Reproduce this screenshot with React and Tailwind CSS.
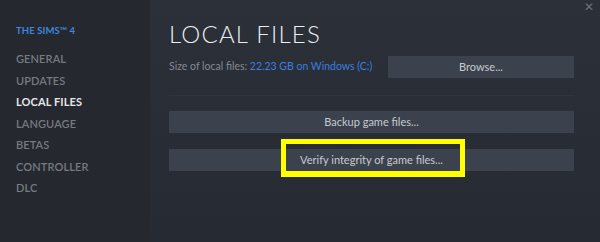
import React from "react";

const navItems = ["GENERAL", "UPDATES", "LOCAL FILES", "LANGUAGE", "BETAS", "CONTROLLER", "DLC"];

const SideNav = () => (
  <div className="w-[150px] shrink-0 bg-[#25282f] pl-4 pt-[25px]">
    <div className="text-[9.5px] font-bold text-[#3f86dc] tracking-[0.01em] leading-[12px]">
      THE SIMS™ 4
    </div>
    <ul className="mt-[15px] flex flex-col gap-[8.5px]">
      {navItems.map((item) => (
        <li
          key={item}
          className={
            item === "LOCAL FILES"
              ? "text-[11px] leading-[13px] font-bold text-[#e4e6e9] tracking-[0.01em]"
              : "text-[11px] leading-[13px] font-semibold text-[#767a81] tracking-[0.01em]"
          }
        >
          {item}
        </li>
      ))}
    </ul>
  </div>
);

const GameButton = ({ children, className = "" }) => (
  <button
    className={
      "h-[22px] bg-[#3c424d] text-[11px] text-[#c6cad0] flex items-center justify-center " +
      className
    }
  >
    {children}
  </button>
);

export default function App() {
  return (
    <div
      className="w-[600px] h-[242px] flex overflow-hidden bg-[#2a2e36]"
      style={{ fontFamily: "Lato, 'Open Sans', sans-serif" }}
    >
      <SideNav />
      <div className="relative flex-1 bg-gradient-to-b from-[#2c3039] to-[#262a32] pl-[19px] pr-[26px] pt-[22px]">
        <button className="absolute right-[6px] top-[1px] text-[#6c7079] text-[12px] leading-none">
          ✕
        </button>
        <h1 className="text-[24px] leading-[24px] font-light text-[#eceef0] tracking-[0.05em]">
          LOCAL FILES
        </h1>
        <div className="mt-[10px] flex items-center justify-between">
          <span className="text-[10.5px] text-[#868a91]">
            Size of local files:{" "}
            <span className="text-[#3a7fe0]">22.23 GB on Windows (C:)</span>
          </span>
          <GameButton className="w-[186px]">Browse...</GameButton>
        </div>
        <div className="mt-[17px] h-px bg-[#30343c]" />
        <div className="mt-[15px] flex flex-col gap-[16px]">
          <GameButton className="w-full">Backup game files...</GameButton>
          <div className="relative">
            <GameButton className="w-full">Verify integrity of game files...</GameButton>
            <div className="absolute left-[112px] top-[-10px] w-[184px] h-[38px] border-[5px] border-[#ffff00] border-b-[6px]" />
          </div>
        </div>
      </div>
    </div>
  );
}
